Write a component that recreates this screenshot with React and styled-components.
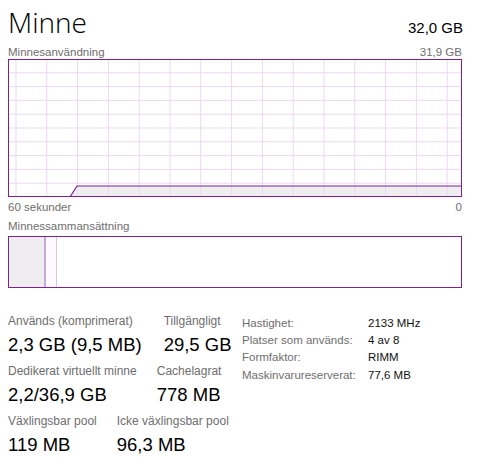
import React from 'react';
import styled, { createGlobalStyle } from 'styled-components';

const GlobalStyle = createGlobalStyle`
  body {
    margin: 0;
    background: #fff;
    font-family: "Liberation Sans", Arial, sans-serif;
  }
`;

const PURPLE = '#7e1f92';
const GRID = '#ead9ef';

// Page frame
const Page = styled.div`
  width: 454px;
  padding: 5px 16px 0 8px;
  color: #000;
`;

// Header section
const Header = styled.div`
  display: flex;
  justify-content: space-between;
  align-items: baseline;
`;
const Title = styled.h1`
  margin: 0;
  font-family: "Open Sans", "Liberation Sans", sans-serif;
  font-size: 28px;
  font-weight: 300;
  line-height: 34px;
`;
const Total = styled.span`
  font-size: 15px;
  margin-right: -1px;
`;

// Small grey captions
const CaptionRow = styled.div`
  display: flex;
  justify-content: space-between;
  font-size: 11.5px;
  line-height: 14px;
  color: #6e6e6e;
  margin-top: ${p => p.top || 0}px;
  margin-bottom: ${p => p.bottom || 0}px;
`;

// Graph
const Graph = styled.svg`
  display: block;
  width: 454px;
  height: 138px;
`;

// Composition bar
const Composition = styled.div`
  display: flex;
  height: 50px;
  border: 1px solid ${PURPLE};
`;
const Segment = styled.div`
  width: ${p => p.w}px;
  background: ${p => p.bg};
  border-right: ${p => p.line ? `${p.line}px solid ${p.lineColor}` : 'none'};
`;

// Stats section
const Stats = styled.div`
  display: flex;
  margin-top: 26px;
`;
const LeftStats = styled.div`
  width: 234px;
  display: flex;
  flex-direction: column;
  gap: 6px;
`;
const StatRow = styled.div`
  display: flex;
  gap: ${p => p.gap || 20}px;
`;
const Stat = styled.div`
  display: flex;
  flex-direction: column;
`;
const StatLabel = styled.span`
  font-size: 12px;
  line-height: 15px;
  color: #6e6e6e;
  white-space: nowrap;
`;
const StatValue = styled.span`
  margin-top: 3px;
  font-size: 18.5px;
  line-height: 26px;
  white-space: nowrap;
`;
const InfoGrid = styled.dl`
  margin: 0;
  display: grid;
  grid-template-columns: 126px auto;
  grid-auto-rows: 17.3px;
  align-items: center;
  font-size: 11.5px;
`;
const InfoLabel = styled.dt`
  color: #6e6e6e;
`;
const InfoValue = styled.dd`
  margin: 0;
  color: #111;
`;

const MemoryGraph = () => {
  const verticals = [];
  for (let x = 8; x < 454; x += 30.8) verticals.push(x);
  const horizontals = [];
  for (let i = 1; i < 10; i++) horizontals.push(i * 13.8);
  return (
    <Graph viewBox="0 0 454 138">
      <polygon points="62,138 69,127 454,127 454,138" fill="#f0edf1" />
      {verticals.map(x => (
        <line key={'v' + x} x1={x} y1="0" x2={x} y2="138" stroke={GRID} strokeWidth="1" />
      ))}
      {horizontals.map(y => (
        <line key={'h' + y} x1="0" y1={y} x2="454" y2={y} stroke={GRID} strokeWidth="1" />
      ))}
      <polyline points="62,138 69,127 454,127" fill="none" stroke={PURPLE} strokeWidth="1.2" />
      <rect x="0.5" y="0.5" width="453" height="137" fill="none" stroke={PURPLE} strokeWidth="1" />
    </Graph>
  );
};

const details = [
  ['Hastighet:', '2133 MHz'],
  ['Platser som används:', '4 av 8'],
  ['Formfaktor:', 'RIMM'],
  ['Maskinvarureserverat:', '77,6 MB'],
];

const App = () => (
  <>
    <GlobalStyle />
    <Page>
      <Header>
        <Title>Minne</Title>
        <Total>32,0 GB</Total>
      </Header>
      <CaptionRow top={6} bottom={0}>
        <span>Minnesanvändning</span>
        <span>31,9 GB</span>
      </CaptionRow>
      <MemoryGraph />
      <CaptionRow top={3}>
        <span>60 sekunder</span>
        <span>0</span>
      </CaptionRow>
      <CaptionRow top={5} bottom={3}>
        <span>Minnessammansättning</span>
      </CaptionRow>
      <Composition>
        <Segment w={35} bg="#f0edf1" line={2} lineColor="#c9a8d6" />
        <Segment w={10} bg="#fcfafd" line={1} lineColor="#d9c7e1" />
      </Composition>
      <Stats>
        <LeftStats>
          <StatRow gap={22}>
            <Stat>
              <StatLabel>Används (komprimerat)</StatLabel>
              <StatValue>2,3 GB (9,5 MB)</StatValue>
            </Stat>
            <Stat>
              <StatLabel>Tillgängligt</StatLabel>
              <StatValue>29,5 GB</StatValue>
            </Stat>
          </StatRow>
          <StatRow>
            <Stat>
              <StatLabel>Dedikerat virtuellt minne</StatLabel>
              <StatValue>2,2/36,9 GB</StatValue>
            </Stat>
            <Stat>
              <StatLabel>Cachelagrat</StatLabel>
              <StatValue>778 MB</StatValue>
            </Stat>
          </StatRow>
          <StatRow>
            <Stat>
              <StatLabel>Växlingsbar pool</StatLabel>
              <StatValue>119 MB</StatValue>
            </Stat>
            <Stat>
              <StatLabel>Icke växlingsbar pool</StatLabel>
              <StatValue>96,3 MB</StatValue>
            </Stat>
          </StatRow>
        </LeftStats>
        <InfoGrid>
          {details.map(([label, value]) => (
            <React.Fragment key={label}>
              <InfoLabel>{label}</InfoLabel>
              <InfoValue>{value}</InfoValue>
            </React.Fragment>
          ))}
        </InfoGrid>
      </Stats>
    </Page>
  </>
);

export default App;
